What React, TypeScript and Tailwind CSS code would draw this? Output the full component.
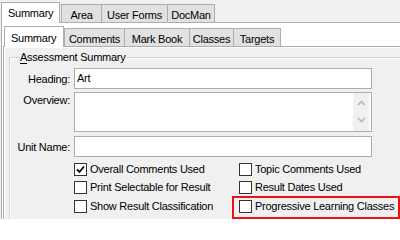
import React from "react";

const font = { fontFamily: '"Liberation Sans", Arial, sans-serif' };

function OuterTab({ label, w, selected }: { label: string; w: string; selected?: boolean }) {
  if (selected)
    return (
      <div className={`relative z-10 -mb-px h-[21px] ${w} border border-b-0 border-[#adadad] bg-white pl-[6px] pt-[3px] leading-[14px]`}>
        {label}
      </div>
    );
  return (
    <div className={`-ml-px h-[18px] ${w} border border-b-0 border-[#adadad] bg-[#e1e1e1] pt-[3px] leading-[14px] text-center`}>
      {label}
    </div>
  );
}

function Chevron({ up }: { up?: boolean }) {
  return (
    <svg width="9" height="6" viewBox="0 0 9 6">
      <path d={up ? "M1 5 L4.5 1.5 L8 5" : "M1 1 L4.5 4.5 L8 1"} fill="none" stroke="#b8b8b8" strokeWidth="1.6" />
    </svg>
  );
}

function Check({ checked, label }: { checked?: boolean; label: string }) {
  return (
    <div className="flex h-[13px] items-center">
      <div className="flex h-[13px] w-[13px] shrink-0 items-center justify-center border border-[#333333] bg-white">
        {checked && (
          <svg width="9" height="9" viewBox="0 0 9 9">
            <path d="M1 4.5 L3.5 7 L8 1.5" fill="none" stroke="#000" strokeWidth="1.8" />
          </svg>
        )}
      </div>
      <span className="ml-[3px] whitespace-nowrap leading-[13px]">{label}</span>
    </div>
  );
}

export default function App() {
  return (
    <div className="h-[219px] w-[400px] overflow-hidden bg-[#f0f0f0] text-[11px] tracking-[-0.25px] text-black" style={font}>
      {/* outer tabs */}
      <div className="flex h-[22px] items-end pl-[1px]">
        <OuterTab label="Summary" w="w-[59px]" selected />
        <div className="ml-[2px] flex">
          <OuterTab label="Area" w="w-[41px]" />
          <OuterTab label="User Forms" w="w-[67px]" />
          <OuterTab label="DocMan" w="w-[48px]" />
        </div>
      </div>
      {/* outer panel */}
      <div className="ml-[1px] h-[197px] border-l border-t border-[#adadad] bg-white">
        {/* inner tabs */}
        <div className="flex h-[23px] items-end pl-[2px]">
          <div className="relative z-10 -mb-px h-[21px] w-[60px] border border-b-0 border-[#adadad] bg-white pl-[6px] pt-[4px] leading-[14px]">
            Summary
          </div>
          <div className="flex">
            {[
              ["Comments", "w-[61px]"],
              ["Mark Book", "w-[66px]"],
              ["Classes", "w-[45px]"],
              ["Targets", "w-[48px]"],
            ].map(([l, w]) => (
              <div
                key={l}
                className={`-ml-px h-[18px] ${w} border border-b-0 border-[#adadad] bg-[#e1e1e1] pt-[3px] text-center leading-[14px] first:ml-0`}
              >
                {l}
              </div>
            ))}
          </div>
        </div>
        {/* inner panel */}
        <div className="ml-[1px] h-[200px] border-l border-t border-[#adadad] bg-[#f0f0f0] shadow-[inset_1px_1px_0_#ffffff]">
          <div className="ml-[5px] mt-[10px] relative h-[170px] border-l border-t border-[#d5d5d5] shadow-[inset_1px_1px_0_#ffffff]">
            <div className="absolute left-[9px] top-[-8px] bg-[#f0f0f0] px-px leading-[14px]">
              <span className="underline underline-offset-[2px]">A</span>ssessment Summary
            </div>
            <div className="flex flex-col pt-[10px]">
              <div className="flex items-center">
                <div className="w-[60px] text-right leading-[14px]">Heading:</div>
                <div className="ml-[4px] flex h-[21px] w-[298px] items-center border border-[#adadad] bg-white pl-[2px]">Art</div>
              </div>
              <div className="mt-[3px] flex items-start">
                <div className="mt-[1px] w-[60px] text-right leading-[14px]">Overview:</div>
                <div className="ml-[4px] flex h-[40px] w-[298px] justify-end border border-[#adadad] bg-white pr-[2px]">
                  <div className="flex h-full w-[16px] flex-col items-center justify-between bg-[#f0f0f0] pb-[8px] pt-[7px]">
                    <Chevron up />
                    <Chevron />
                  </div>
                </div>
              </div>
              <div className="mt-[4px] flex items-center">
                <div className="w-[60px] text-right leading-[14px]">Unit Name:</div>
                <div className="ml-[4px] h-[21px] w-[298px] border border-[#adadad] bg-white" />
              </div>
              <div className="ml-[64px] mt-[6px] flex">
                <div className="flex w-[165px] flex-col">
                  <Check checked label="Overall Comments Used" />
                  <div className="mt-[5px]"><Check label="Print Selectable for Result" /></div>
                  <div className="mt-[6px]"><Check label="Show Result Classification" /></div>
                </div>
                <div className="flex flex-col">
                  <Check label="Topic Comments Used" />
                  <div className="mt-[5px]"><Check label="Result Dates Used" /></div>
                  <div className="relative mt-[6px]">
                    <Check label="Progressive Learning Classes" />
                    <div className="absolute left-[-7px] top-[-4px] h-[23px] w-[168px] border-2 border-[#ee1111]" />
                  </div>
                </div>
              </div>
            </div>
          </div>
        </div>
      </div>
    </div>
  );
}
